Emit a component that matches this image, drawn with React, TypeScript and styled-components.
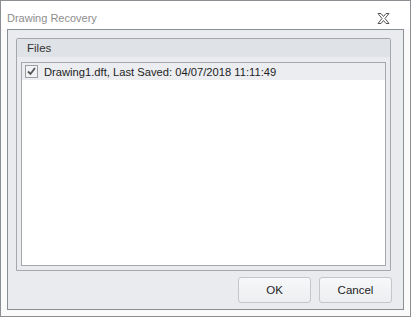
import React from "react"
import styled, { createGlobalStyle } from "styled-components"

const GlobalStyle = createGlobalStyle`
  html, body {
    margin: 0;
    padding: 0;
    background: #ffffff;
  }
  body {
    font-family: "Liberation Sans", Arial, sans-serif;
  }
`

const Window = styled.div`
  box-sizing: border-box;
  width: 411px;
  height: 317px;
  border: 1px solid #8b8f94;
  background: #fafafa;
  display: flex;
  flex-direction: column;
`
const TitleBar = styled.div`
  height: 28px;
  display: flex;
  align-items: center;
  justify-content: space-between;
  padding: 0 20px 0 6px;
  background: #ffffff;
`
const Title = styled.span`
  font-family: "Liberation Sans", Arial, sans-serif;
  font-size: 11px;
  color: #8d8d8d;
  margin-top: 5px;
`
const CloseIcon = styled.svg`
  width: 13px;
  height: 11px;
  margin-top: 6px;
`
const Panel = styled.div`
  flex: 1;
  margin: 0 6px 6px;
  border: 1px solid #8b8f94;
  background: #e9ebef;
  display: flex;
  flex-direction: column;
  padding: 8px 12px 6px 8px;
`
const GroupBox = styled.div`
  flex: 1;
  display: flex;
  flex-direction: column;
  border: 1px solid #a4a8ad;
  border-radius: 2px 2px 0 0;
`
const GroupHeader = styled.div`
  height: 18px;
  display: flex;
  align-items: center;
  padding-left: 10px;
  background: #dfe2e6;
  font-family: "Liberation Sans", Arial, sans-serif;
  font-size: 11.5px;
  color: #333333;
`
const GroupBody = styled.div`
  flex: 1;
  display: flex;
  padding: 5px 4px 4px;
`
const List = styled.div`
  flex: 1;
  border: 1px solid #a4a8ad;
  background: #ffffff;
`
const Row = styled.div<{ selected?: boolean }>`
  height: 17px;
  display: flex;
  align-items: center;
  padding-left: 3px;
  gap: 6px;
  background: ${(p) => (p.selected ? "#ebedf0" : "transparent")};
  font-family: "Liberation Sans", Arial, sans-serif;
  font-size: 11.2px;
  color: #1e1e1e;
`
const Check = styled.span`
  box-sizing: border-box;
  width: 13px;
  height: 13px;
  border: 1px solid #9a9ea3;
  background: #f1f2f4;
  display: flex;
  align-items: center;
  justify-content: center;
`
const Footer = styled.div`
  display: flex;
  justify-content: flex-end;
  gap: 8px;
  padding-top: 6px;
  margin-right: -1px;
`
const Button = styled.button`
  box-sizing: border-box;
  width: 73px;
  height: 26px;
  border: 1px solid #c3c6ca;
  border-radius: 3px;
  background: linear-gradient(#f7f8f9, #eceef1);
  font-family: "Liberation Sans", Arial, sans-serif;
  font-size: 11.5px;
  color: #222222;
  padding: 0;
`

const App = () => {
  return (
    <Window>
      <GlobalStyle />
      <TitleBar>
        <Title>Drawing Recovery</Title>
        <CloseIcon viewBox="0 0 13 11">
          <path
            d="M1 0.5 L4 0.5 L6.5 3.5 L9 0.5 L12 0.5 L8 5.5 L12 10.5 L9 10.5 L6.5 7.5 L4 10.5 L1 10.5 L5 5.5 Z"
            fill="none"
            stroke="#555"
            strokeWidth="1"
          />
        </CloseIcon>
      </TitleBar>
      <Panel>
        <GroupBox>
          <GroupHeader>Files</GroupHeader>
          <GroupBody>
            <List>
              <Row selected>
                <Check>
                  <svg width="9" height="9" viewBox="0 0 9 9">
                    <path d="M1 4.5 L3.5 7 L8 1" fill="none" stroke="#555" strokeWidth="1.8" />
                  </svg>
                </Check>
                Drawing1.dft, Last Saved: 04/07/2018 11:11:49
              </Row>
            </List>
          </GroupBody>
        </GroupBox>
        <Footer>
          <Button>OK</Button>
          <Button>Cancel</Button>
        </Footer>
      </Panel>
    </Window>
  )
}

export default App
